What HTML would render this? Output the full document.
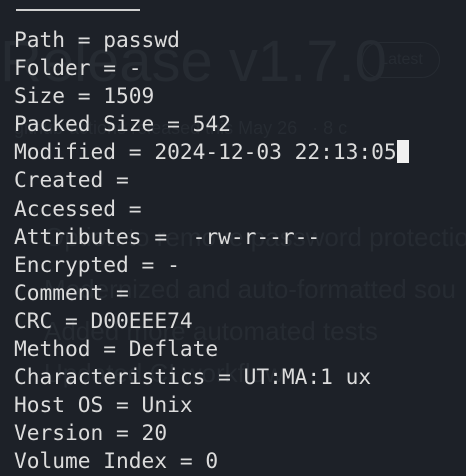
<!DOCTYPE html><html><head><style>
body{margin:0;width:466px;height:470px;background:#1d2128;overflow:hidden;position:relative;font-family:"DejaVu Sans Mono","Liberation Mono",monospace}
.g{position:absolute;color:#262b32;font-family:"Liberation Sans",sans-serif;white-space:nowrap}
pre{position:absolute;left:14px;top:26px;margin:0;font-size:21.2px;line-height:28.1px;color:#dcdcdc;font-family:"DejaVu Sans Mono",monospace}
.c{background:#f0f0f0;display:inline-block;width:12px;height:23px;vertical-align:-4px}
</style></head><body>
<div style="position:absolute;left:16px;top:9px;width:124px;height:2px;background:#d0d0d0"></div>
<div class="g" style="left:0;top:28px;font-size:58px">Release v1.7.0</div>
<div class="g" style="left:362px;top:42px;width:76px;height:34px;border:1px solid #262b32;border-radius:18px;font-size:16px;line-height:34px;text-align:center">Latest</div>
<div class="g" style="left:14px;top:118px;font-size:18px">github-actions released this May 26 &nbsp; · 8 c</div>
<div class="g" style="left:44px;top:222px;font-size:26px">Option to remove password protection</div>
<div class="g" style="left:44px;top:274px;font-size:26px">Modernized and auto-formatted sou</div>
<div class="g" style="left:44px;top:316px;font-size:26px">Added more automated tests</div>
<div class="g" style="left:44px;top:358px;font-size:26px">Updated CI workflow</div>
<pre>Path = passwd
Folder = -
Size = 1509
Packed Size = 542
Modified = 2024-12-03 22:13:05<span class="c"></span>
Created =
Accessed =
Attributes =  -rw-r--r--
Encrypted = -
Comment =
CRC = D00EEE74
Method = Deflate
Characteristics = UT:MA:1 ux
Host OS = Unix
Version = 20
Volume Index = 0</pre>
</body></html>
